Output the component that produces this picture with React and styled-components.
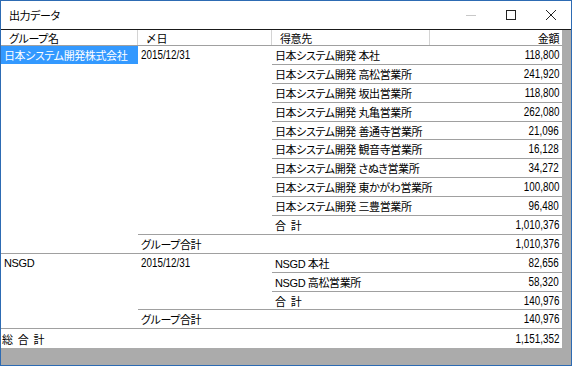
import React from "react";
import styled, { createGlobalStyle } from "styled-components";

const groups = [
  {
    name: "日本システム開発株式会社",
    selected: true,
    date: "2015/12/31",
    rows: [
      ["日本システム開発 本社", "118,800"],
      ["日本システム開発 高松営業所", "241,920"],
      ["日本システム開発 坂出営業所", "118,800"],
      ["日本システム開発 丸亀営業所", "262,080"],
      ["日本システム開発 善通寺営業所", "21,096"],
      ["日本システム開発 観音寺営業所", "16,128"],
      ["日本システム開発 さぬき営業所", "34,272"],
      ["日本システム開発 東かがわ営業所", "100,800"],
      ["日本システム開発 三豊営業所", "96,480"],
    ],
    subtotal: "1,010,376",
    total: "1,010,376",
  },
  {
    name: "NSGD",
    date: "2015/12/31",
    rows: [
      ["NSGD 本社", "82,656"],
      ["NSGD 高松営業所", "58,320"],
    ],
    subtotal: "140,976",
    total: "140,976",
  },
];

const App = () => {
  return (
    <Window>
      <GlobalStyle />
      <TitleBar>
        <Title>出力データ</Title>
        <Controls>
          <CtrlButton>
            <svg width="10" height="10" viewBox="0 0 10 10">
              <path d="M0 5.5h10" stroke="#c8c8c8" strokeWidth="1" />
            </svg>
          </CtrlButton>
          <CtrlButton>
            <svg width="10" height="10" viewBox="0 0 10 10">
              <rect x="0.5" y="0.5" width="9" height="9" fill="none" stroke="#222" strokeWidth="1" />
            </svg>
          </CtrlButton>
          <CtrlButton>
            <svg width="10" height="10" viewBox="0 0 10 10">
              <path d="M0 0L10 10M10 0L0 10" stroke="#222" strokeWidth="1" />
            </svg>
          </CtrlButton>
        </Controls>
      </TitleBar>

      <GridArea>
        <Table>
          <Header>
            <HeadCell $w={137}>グループ名</HeadCell>
            <HeadCell $w={134}>〆日</HeadCell>
            <HeadCell $w={158}>得意先</HeadCell>
            <HeadCell $right $last>金額</HeadCell>
          </Header>

          {groups.map((g) => (
            <Group key={g.name}>
              <NameCol>
                <NameText $selected={g.selected}>{g.name}</NameText>
              </NameCol>
              <Rest>
                <DateBlock>
                  <DateCol>
                    <Num>{g.date}</Num>
                  </DateCol>
                  <Details>
                    {g.rows.map(([client, amount]) => (
                      <Row key={client} $line>
                        <ClientCell>{client}</ClientCell>
                        <Amount>
                          <Num $right>{amount}</Num>
                        </Amount>
                      </Row>
                    ))}
                    <Row>
                      <ClientCell>合&ensp;計</ClientCell>
                      <Amount>
                        <Num $right>{g.subtotal}</Num>
                      </Amount>
                    </Row>
                  </Details>
                </DateBlock>
                <Row>
                  <GroupLabel>グループ合計</GroupLabel>
                  <Amount>
                    <Num $right>{g.total}</Num>
                  </Amount>
                </Row>
              </Rest>
            </Group>
          ))}

          <GrandRow>
            <GrandLabel>総&ensp;合&ensp;計</GrandLabel>
            <Amount>
              <Num $right>1,151,352</Num>
            </Amount>
          </GrandRow>
        </Table>
      </GridArea>
    </Window>
  );
};

//STYLING

const GlobalStyle = createGlobalStyle`
  html, body {
    margin: 0;
    padding: 0;
    background: #fff;
  }
  body {
    font-family: "Liberation Sans", "Noto Sans CJK JP", sans-serif;
    font-size: 11px;
    letter-spacing: -0.4px;
    color: #000;
    font-feature-settings: "palt";
  }
`;

const Window = styled.div`
  width: 572px;
  height: 366px;
  box-sizing: border-box;
  border: 1px solid #2d6bb3;
  display: flex;
  flex-direction: column;
  background: #fff;
  overflow: hidden;
`;

const TitleBar = styled.div`
  height: 28px;
  display: flex;
  align-items: center;
  background: #fff;
`;

const Title = styled.div`
  padding-left: 8px;
  color: #000;
`;

const Controls = styled.div`
  margin-left: auto;
  display: flex;
  align-self: stretch;
`;

const CtrlButton = styled.div`
  width: 40px;
  display: flex;
  align-items: center;
  justify-content: center;
`;

const GridArea = styled.div`
  flex: 1;
  background: #ababab;
  border-top: 1px solid #1a1a1a;
`;

const Table = styled.div`
  width: 561px;
  background: #fff;
`;

const Header = styled.div`
  display: flex;
  height: 15px;
  border-bottom: 1px solid #a0a0a0;
`;

const HeadCell = styled.div`
  box-sizing: border-box;
  width: ${(p) => (p.$w ? `${p.$w}px` : "auto")};
  flex: ${(p) => (p.$w ? "none" : "1")};
  display: flex;
  align-items: center;
  justify-content: ${(p) => (p.$right ? "flex-end" : "flex-start")};
  padding: 0 3px 0 8px;
  border-right: ${(p) => (p.$last ? "none" : "1px solid #d4d4d4")};
  white-space: nowrap;
`;

const Group = styled.div`
  display: flex;
  border-bottom: 1px solid #a0a0a0;
`;

const NameCol = styled.div`
  width: 137px;
  flex: none;
`;

const NameText = styled.div`
  height: 17.9px;
  display: flex;
  align-items: center;
  padding-left: 3px;
  background: ${(p) => (p.$selected ? "#3399ff" : "transparent")};
  color: ${(p) => (p.$selected ? "#fff" : "#000")};
  white-space: nowrap;
  overflow: hidden;
`;

const Rest = styled.div`
  flex: 1;
  display: flex;
  flex-direction: column;
`;

const DateBlock = styled.div`
  display: flex;
  border-bottom: 1px solid #a0a0a0;
`;

const DateCol = styled.div`
  width: 134px;
  flex: none;
  height: 17.9px;
  display: flex;
  align-items: center;
  padding-left: 3px;
  box-sizing: border-box;
`;

// digits in the original are a tall, condensed face
const Num = styled.span`
  display: inline-block;
  font-family: "Liberation Sans", sans-serif;
  font-size: 12px;
  letter-spacing: 0;
  transform: scaleX(0.82);
  transform-origin: ${(p) => (p.$right ? "right" : "left")} center;
`;

const Details = styled.div`
  flex: 1;
  display: flex;
  flex-direction: column;
`;

const Row = styled.div`
  display: flex;
  align-items: center;
  height: 17.9px;
  border-bottom: ${(p) => (p.$line ? "1px solid #a0a0a0" : "none")};
`;

const ClientCell = styled.div`
  width: 158px;
  padding-left: 3px;
  white-space: nowrap;
`;

const GroupLabel = styled.div`
  width: 134px;
  padding-left: 3px;
  white-space: nowrap;
`;

const Amount = styled.div`
  flex: 1;
  text-align: right;
  padding-right: 3px;
`;

const GrandRow = styled.div`
  display: flex;
  align-items: center;
  height: 18.9px;
`;

const GrandLabel = styled.div`
  padding-left: 1px;
  white-space: nowrap;
`;

export default App;
